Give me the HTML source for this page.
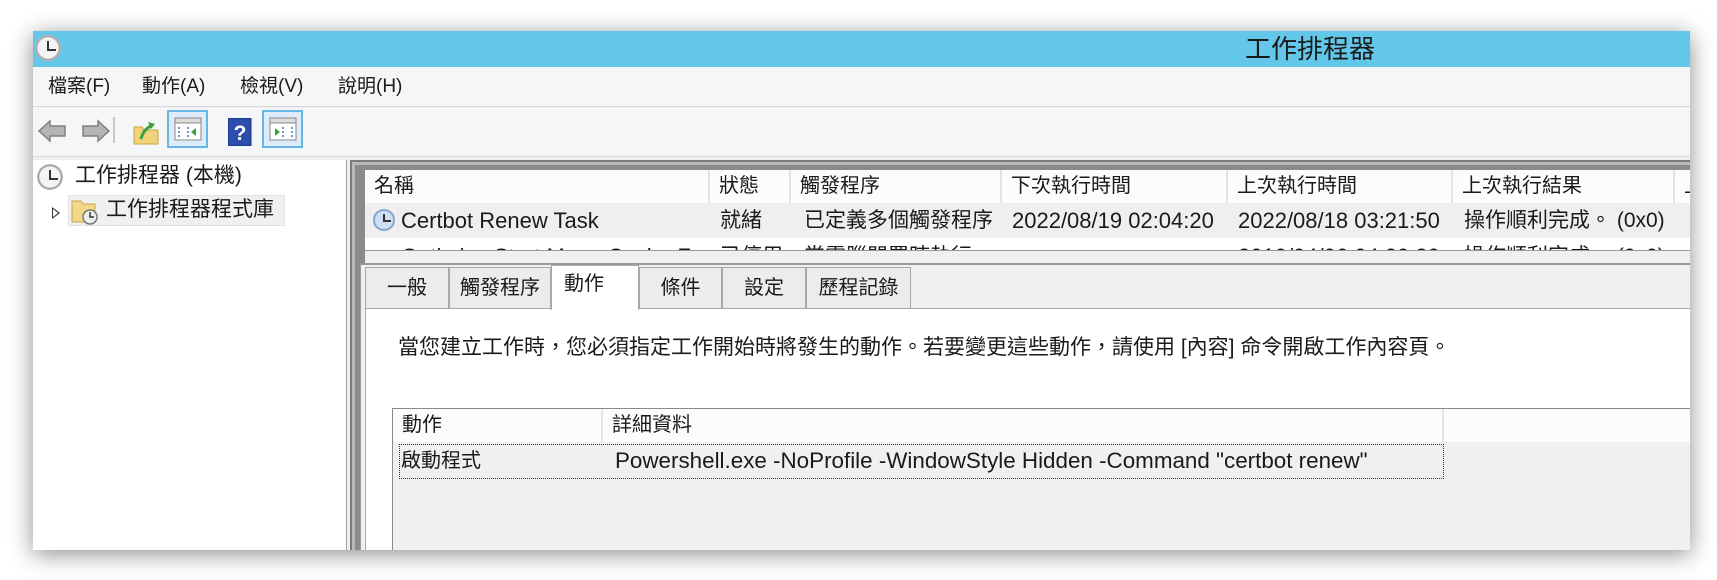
<!DOCTYPE html>
<html><head><meta charset="utf-8">
<style>
*{margin:0;padding:0;box-sizing:border-box}
body{width:1717px;height:580px;background:#fff;position:relative;overflow:hidden;font-family:"Liberation Sans","Noto Sans CJK TC",sans-serif;color:#1a1a1a}
.a{position:absolute;white-space:nowrap}
#win{position:absolute;left:33px;top:31px;width:1657px;height:519px;background:#f0f0f0;box-shadow:0 4px 22px rgba(0,0,0,.45);overflow:hidden}
.t{font-size:19px;line-height:22px}
.clock{position:absolute;border-radius:50%;background:radial-gradient(circle,#f4f4f4 55%,#9a9a9a 62%,#d8d8d8 75%,#7e7e7e 100%)}
.clock:after{content:"";position:absolute;left:46%;top:22%;width:28%;height:30%;border-left:2px solid #333;border-bottom:2px solid #333}
.hd{position:absolute;top:0;height:33px;background:#fcfcfc;border-right:2px solid #e4e4e4;font-size:20px;line-height:33px;padding-left:9px}
.tab{position:absolute;top:0;height:42px;background:#ececec;border:1px solid #a8a8a8;font-size:20px;line-height:40px;text-align:center}
.r{position:absolute;top:39px;font-size:21px;line-height:24px}
</style></head><body>
<div id="win">
 <div class="a" style="left:0;top:0;width:1657px;height:36px;background:#63c7ea"></div>
 <div class="clock" style="left:2px;top:4px;width:26px;height:26px"></div>
 <div class="a" style="left:1212px;top:3px;font-size:26px;line-height:30px;color:#1a1a1a">工作排程器</div>
 <div class="a" style="left:0;top:36px;width:1657px;height:40px;background:#f5f6f7;border-bottom:1px solid #d8d8d8"></div>
 <div class="a t" style="left:15px;top:45px">檔案(F)</div>
 <div class="a t" style="left:109px;top:45px">動作(A)</div>
 <div class="a t" style="left:207px;top:45px">檢視(V)</div>
 <div class="a t" style="left:305px;top:45px">說明(H)</div>
 <div class="a" style="left:0;top:77px;width:1657px;height:49px;background:#f5f6f7;border-bottom:1px solid #dcdcdc"></div>
 <svg class="a" style="left:4px;top:86px" width="74" height="28"><path d="M2 14 L13 4 L13 9 L28 9 L28 19 L13 19 L13 24 Z" fill="#b4b4b4" stroke="#808080" stroke-width="1.5"/><path d="M72 14 L61 4 L61 9 L46 9 L46 19 L61 19 L61 24 Z" fill="#b4b4b4" stroke="#808080" stroke-width="1.5"/></svg>
 <div class="a" style="left:80px;top:86px;width:2px;height:26px;background:#c8c8c8"></div>
 <svg class="a" style="left:100px;top:88px" width="26" height="26"><path d="M1 8 h8 l2 3 h14 v14 h-24z" fill="#f2d27a" stroke="#c9a24a"/><path d="M8 20 C10 12 14 9 19 6" stroke="#3aa13a" stroke-width="3" fill="none"/><path d="M15 3 l7 2 l-4 5z" fill="#3aa13a"/></svg>
 <div class="a" style="left:134px;top:79px;width:41px;height:38px;background:#dcecfa;border:2px solid #67b6e6"></div>
 <svg class="a" style="left:141px;top:86px" width="28" height="24"><rect x="1" y="1" width="26" height="22" fill="#fff" stroke="#888"/><rect x="1" y="1" width="26" height="5" fill="#ddd" stroke="#888"/><path d="M5 10v10M14 10v10" stroke="#6a9ad0" stroke-width="2" stroke-dasharray="2 2"/><path d="M22 11 v8 l-5-4z" fill="#3aa13a"/></svg>
 <svg class="a" style="left:195px;top:87px" width="24" height="28"><rect x="0" y="0" width="23" height="28" fill="#2c4fae" stroke="#1a2f70"/><text x="12" y="22" font-size="21" font-weight="bold" fill="#fff" text-anchor="middle" font-family="Liberation Sans">?</text></svg>
 <div class="a" style="left:229px;top:79px;width:41px;height:38px;background:#dcecfa;border:2px solid #67b6e6"></div>
 <svg class="a" style="left:236px;top:86px" width="28" height="24"><rect x="1" y="1" width="26" height="22" fill="#fff" stroke="#888"/><rect x="1" y="1" width="26" height="5" fill="#ddd" stroke="#888"/><path d="M23 10v10M14 10v10" stroke="#6a9ad0" stroke-width="2" stroke-dasharray="2 2"/><path d="M6 11 v8 l5-4z" fill="#3aa13a"/></svg>
 <div class="a" style="left:0;top:129px;width:314px;height:400px;background:#fff;border-right:1px solid #a0a0a0"></div>
 <div class="clock" style="left:4px;top:133px;width:26px;height:26px"></div>
 <div class="a" style="left:42px;top:133px;font-size:21px;line-height:24px">工作排程器 (本機)</div>
 <div class="a" style="left:19px;top:176px;width:0;height:0;border-top:6px solid transparent;border-bottom:6px solid transparent;border-left:8px solid #333"></div>
 <div class="a" style="left:20px;top:178px;width:0;height:0;border-top:4px solid transparent;border-bottom:4px solid transparent;border-left:5px solid #fff"></div>
 <div class="a" style="left:35px;top:164px;width:217px;height:31px;background:#f0f0f0;border:1px solid #e2e2e2"></div>
 <svg class="a" style="left:38px;top:166px" width="28" height="28"><path d="M1 4 h9 l2 3 h12 v18 h-23z" fill="#f3d888" stroke="#c9a24a"/><circle cx="19" cy="20" r="7" fill="#eee" stroke="#777" stroke-width="1.5"/><path d="M19 15 v5 h4" stroke="#333" stroke-width="1.5" fill="none"/></svg>
 <div class="a" style="left:73px;top:167px;font-size:21px;line-height:24px">工作排程器程式庫</div>
 <div class="a" style="left:317px;top:129px;width:1340px;height:400px;background:#7a7a7a"></div>
 <div class="a" style="left:319px;top:131px;width:1338px;height:398px;background:#b9b9b9"></div>
 <div class="a" style="left:322px;top:134px;width:1335px;height:395px;background:#8a8a8a"></div>
 <div class="a" style="left:332px;top:139px;width:1325px;height:80px;background:#fff;overflow:hidden">
  <div class="hd" style="left:0;width:345px">名稱</div>
  <div class="hd" style="left:345px;width:81px">狀態</div>
  <div class="hd" style="left:426px;width:211px">觸發程序</div>
  <div class="hd" style="left:637px;width:226px">下次執行時間</div>
  <div class="hd" style="left:863px;width:225px">上次執行時間</div>
  <div class="hd" style="left:1088px;width:222px">上次執行結果</div>
  <div class="hd" style="left:1310px;width:20px">上</div>
  <div class="a" style="left:0;top:33px;width:1325px;height:35px;background:#efefef"></div>
  <div class="clock" style="left:8px;top:39px;width:22px;height:22px;background:radial-gradient(circle,#cfe0f2 55%,#6f95c3 64%,#b5cbe4 78%,#7292bb 100%)"></div>
  <div class="r" style="left:36px;font-size:22px">Certbot Renew Task</div>
  <div class="r" style="left:355px">就緒</div>
  <div class="r" style="left:439px">已定義多個觸發程序</div>
  <div class="r" style="left:647px;font-size:22px">2022/08/19 02:04:20</div>
  <div class="r" style="left:873px;font-size:22px">2022/08/18 03:21:50</div>
  <div class="r" style="left:1099px">操作順利完成。 (0x0)</div>
  <div class="r" style="left:36px;top:75px;font-size:22px">Optimize Start Menu Cache F</div>
  <div class="r" style="left:355px;top:75px">已停用</div>
  <div class="r" style="left:439px;top:75px">當電腦閒置時執行</div>
  <div class="r" style="left:873px;top:75px;font-size:22px">2019/04/06 04:20:30</div>
  <div class="r" style="left:1099px;top:75px">操作順利完成。 (0x0)</div>
 </div>
 <div class="a" style="left:332px;top:219px;width:1325px;height:13px;background:#f0f0f0;border-top:1px solid #9a9a9a"></div>
 <div class="a" style="left:327px;top:232px;width:1330px;height:297px;background:#f0f0f0;border-top:2px solid #9a9a9a;border-left:1px solid #9a9a9a"></div>
 <div class="a" style="left:332px;top:236px;width:1325px;height:293px">
  <div class="tab" style="left:0;width:84px">一般</div>
  <div class="tab" style="left:84px;width:102px">觸發程序</div>
  <div class="tab" style="left:274px;width:83px">條件</div>
  <div class="tab" style="left:357px;width:84px">設定</div>
  <div class="tab" style="left:441px;width:105px">歷程記錄</div>
 </div>
 <div class="a" style="left:332px;top:277px;width:1325px;height:252px;background:#fff;border-top:1px solid #a8a8a8;border-left:1px solid #a8a8a8"></div>
 <div class="a" style="left:518px;top:234px;width:88px;height:45px;background:#fff;border:1px solid #a8a8a8;border-bottom:none;font-size:20px;line-height:36px;padding-left:12px">動作</div>
 <div class="a" style="left:365px;top:305px;font-size:21px;line-height:24px">當您建立工作時，您必須指定工作開始時將發生的動作。若要變更這些動作，請使用 [內容] 命令開啟工作內容頁。</div>
 <div class="a" style="left:359px;top:377px;width:1298px;height:152px;background:#f0f0f0;border-top:1px solid #8a8a8a;border-left:1px solid #8a8a8a"></div>
 <div class="hd" style="left:360px;top:378px;width:210px;border-right:2px solid #e6e6e6">動作</div>
 <div class="hd" style="left:570px;top:378px;width:841px">詳細資料</div>
 <div class="hd" style="left:1411px;top:378px;width:246px;border:none"></div>
 <div class="a" style="left:366px;top:413px;width:1045px;height:35px;border:1px dotted #333"></div>
 <div class="a" style="left:368px;top:418px;font-size:20px;line-height:24px">啟動程式</div>
 <div class="a" style="left:582px;top:418px;font-size:22.4px;line-height:24px">Powershell.exe -NoProfile -WindowStyle Hidden -Command "certbot renew"</div>
</div>
</body></html>
